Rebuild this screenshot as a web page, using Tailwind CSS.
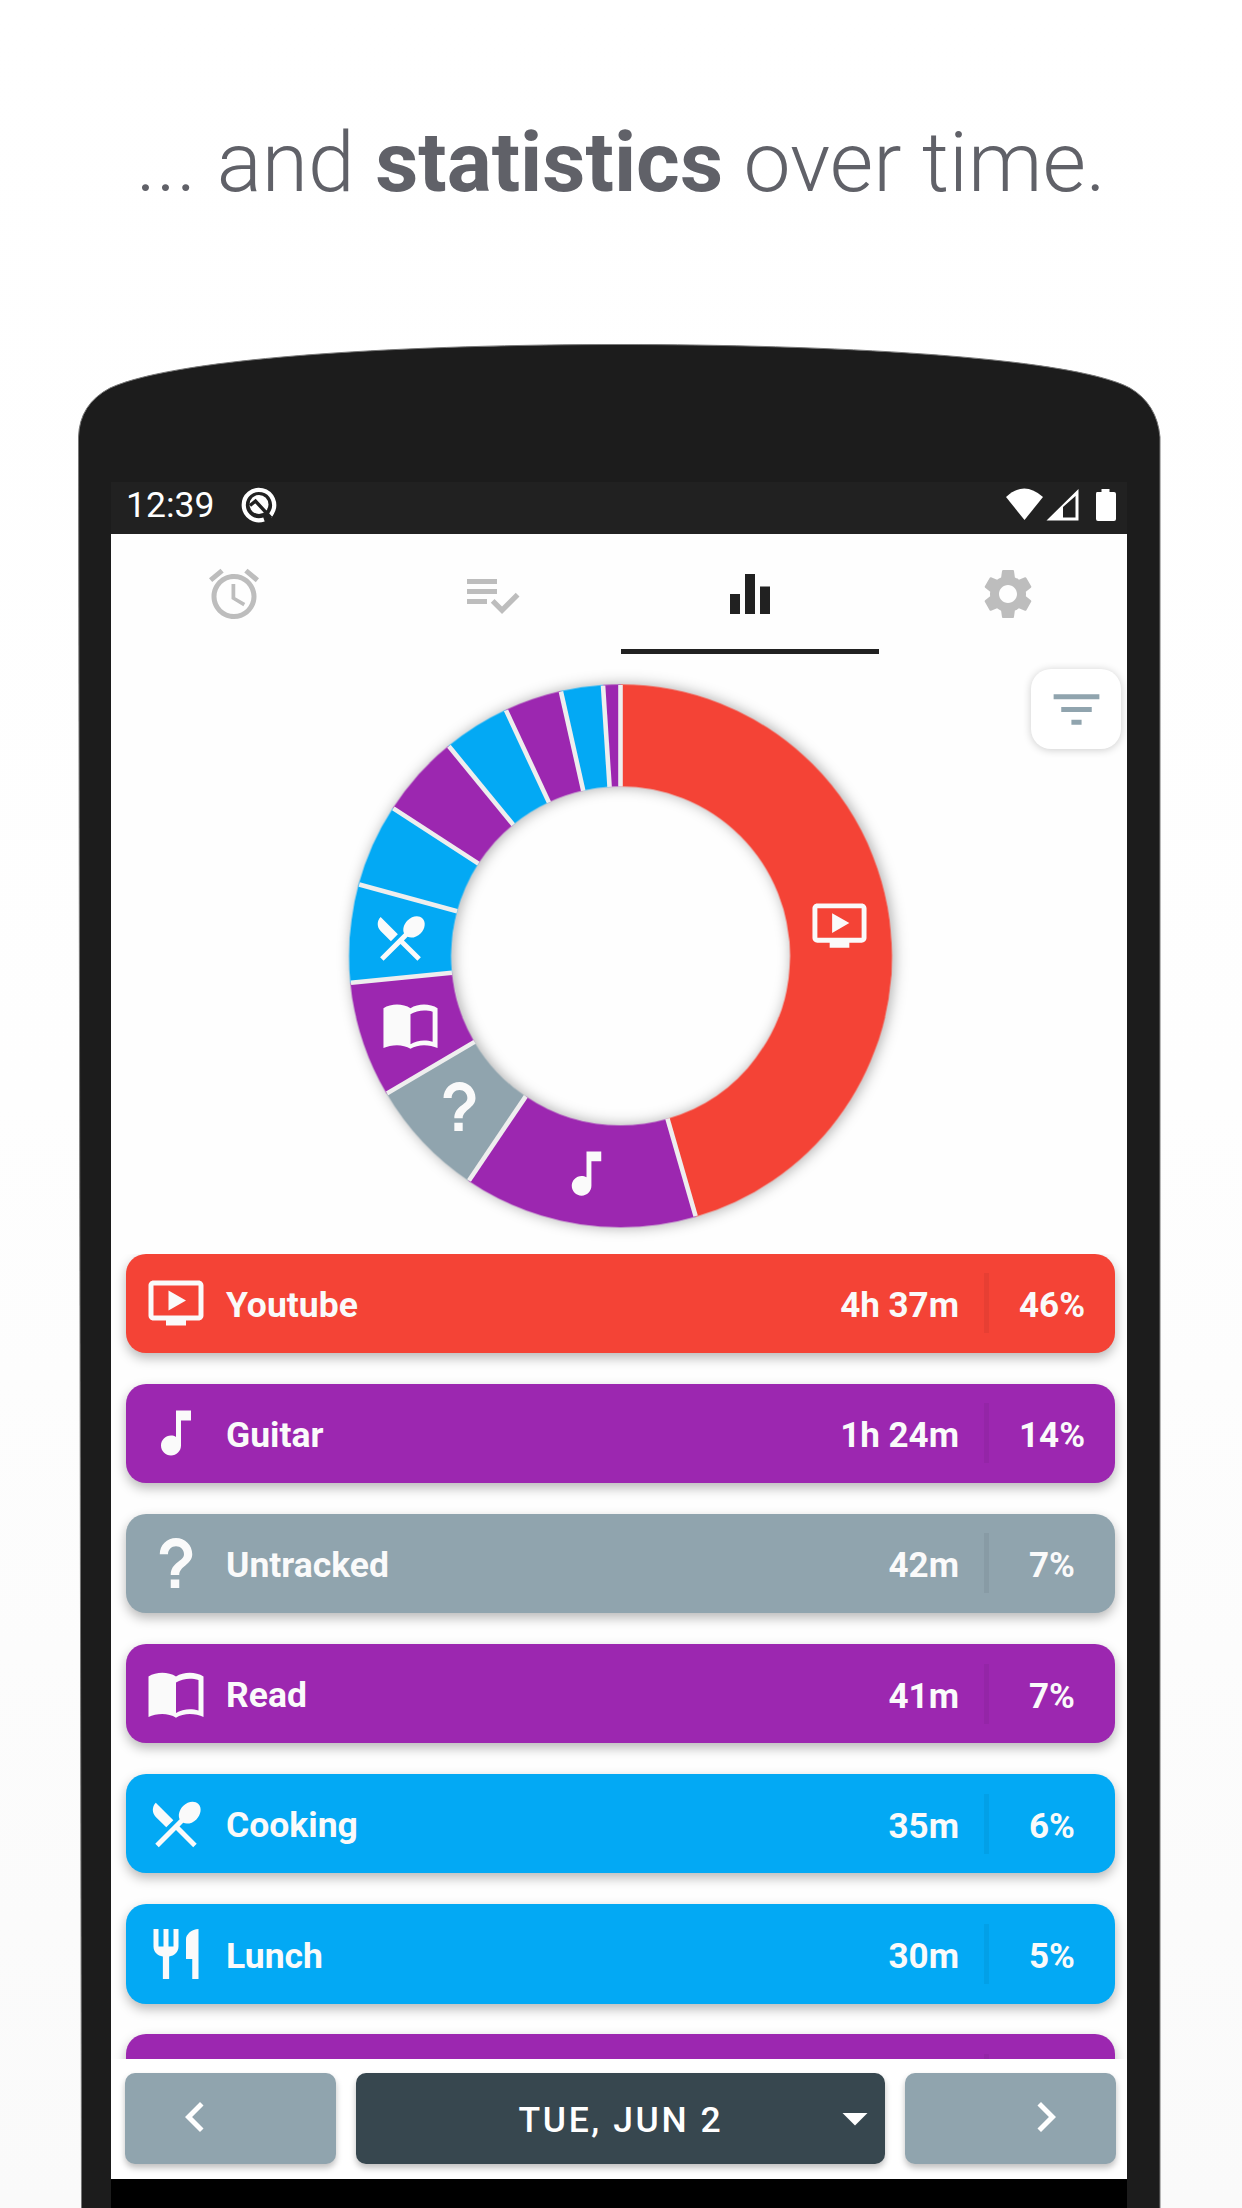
<!DOCTYPE html>
<html lang="en">
<head>
<meta charset="utf-8">
<title>Statistics</title>
<script src="https://cdn.jsdelivr.net/npm/@tailwindcss/browser@4"></script>
</head>
<body class="w-[1242px] h-[2208px] overflow-hidden bg-linear-to-b from-white via-[#fefefe] to-[#fafafa] font-['Roboto',sans-serif]">
<svg class="hidden">
  <symbol id="tv" viewBox="0 0 24 24"><path d="M21 3H3c-1.11 0-2 .89-2 2v12c0 1.1.89 2 2 2h5v2h8v-2h5c1.1 0 1.99-.9 1.99-2L23 5c0-1.11-.9-2-2-2zm0 14H3V5h18v12zm-5-6l-7 4V7z"/></symbol>
  <symbol id="note" viewBox="0 0 24 24"><path d="M12 3v10.55c-.59-.34-1.27-.55-2-.55-2.21 0-4 1.79-4 4s1.79 4 4 4 4-1.79 4-4V7h4V3h-6z"/></symbol>
  <symbol id="question" viewBox="0 0 24 24"><path d="M9.900 18.600h3.400v3.400H9.900zM5.500 8.500C5.500 4.800 8.400 2 12 2s6.500 2.800 6.500 6.500c0 4.100-5.200 4.800-5.200 8.300H9.900c0-5.200 5.300-5.400 5.300-8.300 0-1.800-1.400-3.200-3.200-3.200S8.800 6.700 8.800 8.500z"/></symbol>
  <symbol id="book" viewBox="0 0 24 24"><path d="M12 5C10.500 4 8.400 3.500 6.500 3.500S2.500 4 1 5v16.200C2.500 20.500 4.600 20 6.500 20S10.500 20.500 12 21.500c1.500-1 3.600-1.500 5.500-1.500s4 .5 5.500 1.200V5C21.500 4 19.400 3.500 17.500 3.500S13.500 4 12 5zM21 18.600c-1.100-.3-2.300-.5-3.500-.5-1.700 0-4.100.6-5.500 1.500V7.400c1.400-.9 3.800-1.500 5.500-1.500 1.200 0 2.400.1 3.500.5z"/></symbol>
  <symbol id="cook" viewBox="0 0 24 24"><path d="M8.100 13.340l2.830-2.830L3.910 3.500c-1.560 1.560-1.560 4.090 0 5.660l4.190 4.180zm6.780-1.810c1.530.71 3.680.21 5.270-1.380 1.910-1.910 2.280-4.650.81-6.120-1.460-1.460-4.200-1.100-6.120.81-1.590 1.590-2.090 3.740-1.380 5.270L3.700 19.870l1.410 1.410L12 14.410l6.880 6.880 1.410-1.410L13.410 13l1.470-1.470z"/></symbol>
  <symbol id="lunch" viewBox="0 0 24 24"><path d="M11 9H9V2H7v7H5V2H3v7c0 2.120 1.660 3.840 3.750 3.970V22h2.500v-9.030C11.340 12.840 13 11.120 13 9V2h-2v7zm5-3v8h2.500v8H21V2c-2.760 0-5 2.240-5 4z"/></symbol>
</svg>
<main class="relative flex flex-col items-center w-full h-full">
  <svg class="absolute inset-0" width="1242" height="2208" viewBox="0 0 1242 2208"><path d="M81.500 2208L78.500 437Q79.500 404 110 388C180 356 420 344.500 620 344.500S1070 356 1130 388Q1157 404 1160 437V2208" fill="#1c1c1c" stroke="#777" stroke-width="1"/></svg>
  <h1 class="relative h-[482px] pt-[114px] text-[84px] leading-[97px] font-light text-[#606168] whitespace-nowrap">... and <b class="font-bold">statistics</b> over time.</h1>

  <section class="relative w-[1016px] ml-[-4px] h-[1726px] shrink-0 flex flex-col bg-black overflow-hidden">
    <header class="h-[52px] shrink-0 bg-[#212121] text-white flex items-center pl-[15px] pr-[11px] pb-[7px]">
      <span class="text-[35.500px] leading-none w-[115px] pt-0.5">12:39</span>
      <svg class="size-9" viewBox="0 0 36 36"><path d="M23 32.400A15.200 15.200 0 1 1 31.200 25.500Q30 28 28.500 29.500" fill="none" stroke="#fff" stroke-width="4.200"/><circle cx="18" cy="17.500" r="9.500" fill="#fff"/><path d="M9 18.500L14.500 14L30 31" fill="none" stroke="#212121" stroke-width="3.400"/></svg>
      <svg class="ml-auto" width="110" height="34" viewBox="0 0 110 34" fill="#fff"><path d="M0 9Q18 -8 37 9L18.500 32z"/><path fill-rule="evenodd" d="M40.500 32.500L72.500 1v31.500zM57 19v10.500h12.500V8z"/><path d="M91 4h4.500V1h8v3h4.500q2 0 2 2v25q0 2-2 2H92q-2 0-2-2V6q0-2 1-2z"/></svg>
    </header>

    <div class="relative h-[1644.500px] bg-[#fefefe] flex flex-col shrink-0">
      <nav class="w-[1032px] ml-[-6.500px] h-[120px] shrink-0 grid grid-cols-4 fill-[#bdbdbd]">
        <div class="flex justify-center pt-[29.500px]"><svg class="size-[60px]" viewBox="0 0 24 24"><path d="M22 5.720l-4.600-3.860-1.290 1.530 4.600 3.860L22 5.720zM7.880 3.390L6.600 1.860 2 5.710l1.290 1.530 4.590-3.850zM12.500 8H11v6l4.750 2.850.75-1.230-4-2.370V8zM12 4c-4.970 0-9 4.030-9 9s4.020 9 9 9c4.970 0 9-4.030 9-9s-4.030-9-9-9zm0 16c-3.870 0-7-3.130-7-7s3.130-7 7-7 7 3.130 7 7-3.130 7-7 7z"/></svg></div>
        <div class="flex justify-center pt-[29.500px]"><svg class="size-[60px]" viewBox="0 0 24 24"><path d="M14 10H2v2h12v-2zm0-4H2v2h12V6zM2 16h8v-2H2v2zm19.500-4.500L23 13l-6.990 7-4.510-4.500L13 14l3.010 3 5.490-5.500z"/></svg></div>
        <div class="flex justify-center pt-[29.500px] border-b-5 border-[#212121] fill-[#212121]"><svg class="size-[60px]" viewBox="0 0 24 24"><path d="M10 20h4V4h-4v16zm-6 0h4v-8H4v8zM16 9v11h4V9h-4z"/></svg></div>
        <div class="flex justify-center pt-[29.500px]"><svg class="size-[60px]" viewBox="0 0 24 24"><path d="M19.140 12.940c.04-.3.06-.61.06-.94 0-.32-.02-.64-.07-.94l2.030-1.580c.18-.14.23-.41.12-.61l-1.920-3.320c-.12-.22-.37-.29-.59-.22l-2.390.96c-.5-.38-1.030-.7-1.620-.94l-.36-2.540c-.04-.24-.24-.41-.48-.41h-3.840c-.24 0-.43.17-.47.41l-.36 2.540c-.59.24-1.130.57-1.620.94l-2.390-.96c-.22-.08-.47 0-.59.22L2.740 8.870c-.12.21-.08.47.12.61l2.030 1.580c-.05.3-.09.63-.09.94s.02.64.07.94l-2.030 1.580c-.18.14-.23.41-.12.61l1.920 3.320c.12.22.37.29.59.22l2.390-.96c.5.38 1.030.7 1.620.94l.36 2.540c.05.24.24.41.48.41h3.840c.24 0 .44-.17.47-.41l.36-2.540c.59-.24 1.130-.56 1.620-.94l2.390.96c.22.08.47 0 .59-.22l1.920-3.320c.12-.22.07-.47-.12-.61l-2.010-1.580zM12 15.600c-1.980 0-3.600-1.620-3.600-3.600s1.620-3.600 3.600-3.600 3.600 1.620 3.600 3.600-1.620 3.600-3.600 3.600z"/></svg></div>
      </nav>

      <button class="absolute left-[920px] top-[135px] w-[90px] h-20 rounded-[20px] bg-white shadow-[0_1px_8px_rgba(0,0,0,0.2)] flex items-center justify-center"><svg class="size-[61px] fill-[#90a4ae]" viewBox="0 0 24 24"><path d="M10 18h4v-2h-4v2zM3 6v2h18V6H3zm3 7h12v-2H6v2z"/></svg></button>

      <div class="h-[599.500px] shrink-0 flex">
        <svg class="overflow-visible" width="1016" height="600" viewBox="111 654 1016 600">
          <g transform="rotate(-90 620.500 955.900)" fill="none" stroke-width="102" class="drop-shadow-[0_2px_7px_rgba(0,0,0,0.32)]">
            <circle cx="620.500" cy="955.900" r="220.500" stroke="#eee"/>
            <g id="slices"></g>
          </g>
          <g id="separators" stroke="#eee" stroke-width="4.600"></g>
          <g fill="#fafafa">
            <use href="#tv" x="810" y="896" width="59" height="59"/>
            <use href="#note" x="557" y="1144" width="59" height="59"/>
            <use href="#question" x="430" y="1077" width="59" height="59"/>
            <use href="#book" x="381" y="996" width="59" height="59"/>
            <use href="#cook" x="371" y="908.500" width="59" height="59"/>
          </g>
        </svg>
      </div>

      <div id="list" class="h-[805px] shrink-0 overflow-hidden pl-[15px] pr-3 flex flex-col gap-[30.500px]"></div>

      <footer class="relative bg-white flex gap-5 pl-3.5 pt-3.5 h-[120px] text-white fill-white">
        <button class="w-[211px] h-[91px] rounded-[10px] bg-[#90a4ae] shadow-[0_4px_6px_rgba(0,0,0,0.25)] pl-10 pb-[3px]"><svg class="size-[60px]" viewBox="0 0 24 24"><path d="M15.410 7.410L14 6l-6 6 6 6 1.410-1.410L10.830 12z"/></svg></button>
        <button class="w-[529px] h-[91px] rounded-[10px] bg-[#37474f] shadow-[0_4px_6px_rgba(0,0,0,0.25)] flex items-center"><span class="flex-1 pl-[61px] pt-[5px] text-[35.500px] font-medium tracking-[2.600px] text-center">TUE, JUN 2</span><svg class="size-[60px]" viewBox="0 0 24 24"><path d="M7 10l5 5 5-5z"/></svg></button>
        <button class="w-[211px] h-[91px] rounded-[10px] bg-[#90a4ae] shadow-[0_4px_6px_rgba(0,0,0,0.25)] pl-[111px] pb-0.5"><svg class="size-[60px]" viewBox="0 0 24 24"><path d="M10 6L8.590 7.410 13.170 12l-4.580 4.590L10 18l6-6z"/></svg></button>
      </footer>
    </div>
  </section>
</main>
<script>
const red = '#f44336', purple = '#9c27b0', grey = '#90a4ae', blue = '#03a9f4';
const slices = [[0, 163.9, red], [163.9, 214, purple], [214, 239.5, grey], [239.5, 264.3, purple], [264.3, 285.300, blue], [285.300, 303, blue], [303, 320.700, purple], [320.700, 335, blue], [335, 347.300, purple], [347.300, 356.300, blue], [356.300, 360, purple]];
document.getElementById('slices').innerHTML = slices.map(([a, b, c]) =>
  `<circle cx="620.5" cy="955.9" r="220.5" pathLength="360" stroke="${c}" stroke-dasharray="${b - a} 360" stroke-dashoffset="${-a}"/>`).join('');
document.getElementById('separators').innerHTML = slices.map(([a]) =>
  `<path d="M620.5 786.500V685" transform="rotate(${a} 620.5 955.9)"/>`).join('');
const rows = [['tv', 'Youtube', '4h 37m', '46%', red], ['note', 'Guitar', '1h 24m', '14%', purple], ['question', 'Untracked', '42m', '7%', grey], ['book', 'Read', '41m', '7%', purple], ['cook', 'Cooking', '35m', '6%', blue], ['lunch', 'Lunch', '30m', '5%', blue], ['note', '', '', '', purple]];
document.getElementById('list').innerHTML = rows.map(([icon, name, time, pct, color]) => `
  <div class="h-[99.600px] shrink-0 rounded-[20px] shadow-[0_5px_12px_rgba(0,0,0,0.28)] flex items-center pl-5 text-[35.500px] leading-none font-bold text-[#fafafa]" style="background:${color}">
    <svg class="size-[60px] fill-[#fafafa]"><use href="#${icon}"/></svg>
    <span class="pl-5 pt-[5px]">${name}</span><span class="ml-auto pr-[25px] pt-[5px] text-[35px]">${time}</span>
    <i class="w-[5px] h-[60px] bg-black/5"></i><span class="w-[126px] text-center pt-[5px] text-[35px]">${pct}</span>
  </div>`).join('');
</script>
</body>
</html>
